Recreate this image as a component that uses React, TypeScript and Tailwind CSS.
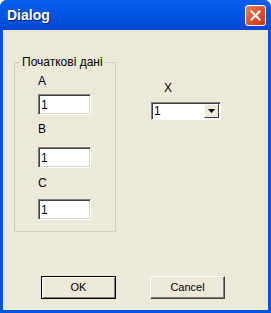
const font = { fontFamily: '"Liberation Sans", Arial, sans-serif' };

function TextBox({ value }: { value: string }) {
  return (
    <div className="flex h-[21px] w-[53px] items-center border border-t-[#808080] border-l-[#808080] border-b-white border-r-white bg-white pl-[2px] text-[12px] text-black shadow-[inset_1px_1px_0_#404040,inset_-1px_-1px_0_#d4d0c8]">
      {value}
    </div>
  );
}

function Button({ label, isDefault }: { label: string; isDefault?: boolean }) {
  return (
    <button
      className={
        isDefault
          ? "flex h-[23px] w-[75px] items-center justify-center border border-black bg-[#ece9d8] text-[11px] text-black shadow-[inset_1px_1px_0_#fff,inset_-1px_-1px_0_#808080]"
          : "flex h-[23px] w-[75px] items-center justify-center border border-t-white border-l-white border-b-[#404040] border-r-[#404040] bg-[#ece9d8] text-[11px] text-black shadow-[inset_-1px_-1px_0_#808080]"
      }
    >
      {label}
    </button>
  );
}

export default function App() {
  return (
    <div
      className="flex h-[313px] w-[271px] flex-col overflow-hidden rounded-t-[7px] bg-[#0054e3]"
      style={font}
    >
      {/* Title bar */}
      <div className="flex h-[30px] shrink-0 items-center justify-between bg-gradient-to-b from-[#0a5fef] via-[#0054e3] to-[#0048d0] pl-[7px] pr-[5px]">
        <span className="text-[14px] font-bold text-white [text-shadow:1px_1px_0_#0a1f6a]">
          Dialog
        </span>
        <div className="flex h-[21px] w-[21px] items-center justify-center rounded-[3px] border border-white bg-gradient-to-br from-[#e8805e] via-[#e0532f] to-[#c23a17]">
          <svg width="11" height="11" viewBox="0 0 11 11">
            <path d="M1.5 1.5 L9.5 9.5 M9.5 1.5 L1.5 9.5" stroke="white" strokeWidth="2" strokeLinecap="square" />
          </svg>
        </div>
      </div>

      {/* Client area */}
      <div className="mx-[3px] mb-[3px] flex flex-1 flex-col bg-[#ece9d8] pl-[11px] pt-[25px] text-[11px] text-black">
        <div className="flex">
          <fieldset className="h-[177px] w-[102px] border border-[#d0d0bf]">
            <legend className="ml-[5px] whitespace-nowrap px-[2px] text-[12px] leading-[14px]">Початкові дані</legend>
            <div className="flex flex-col pl-[23px] text-[12px]">
              <span className="mt-[5px] leading-[14px]">A</span>
              <div className="mt-[6px]"><TextBox value="1" /></div>
              <span className="mt-[7px] leading-[14px]">B</span>
              <div className="mt-[11px]"><TextBox value="1" /></div>
              <span className="mt-[8px] leading-[14px]">C</span>
              <div className="mt-[9px]"><TextBox value="1" /></div>
            </div>
          </fieldset>

          <div className="ml-[35px] flex flex-col text-[12px]">
            <span className="ml-[13px] mt-[26px] leading-[14px]">X</span>
            <div className="mt-[7px] flex h-[18px] w-[70px] items-center border border-t-[#808080] border-l-[#808080] border-b-white border-r-white bg-white shadow-[inset_1px_1px_0_#404040]">
              <span className="flex-1 pl-[2px] leading-[14px]">1</span>
              <div className="mr-px flex h-[14px] w-[15px] items-center justify-center border border-t-white border-l-white border-b-[#404040] border-r-[#404040] bg-[#ece9d8]">
                <svg width="7" height="4" viewBox="0 0 7 4">
                  <path d="M0 0 H7 L3.5 4 Z" fill="black" />
                </svg>
              </div>
            </div>
          </div>
        </div>

        <div className="ml-[27px] mt-[44px] flex gap-[34px]">
          <Button label="OK" isDefault />
          <Button label="Cancel" />
        </div>
      </div>
    </div>
  );
}
